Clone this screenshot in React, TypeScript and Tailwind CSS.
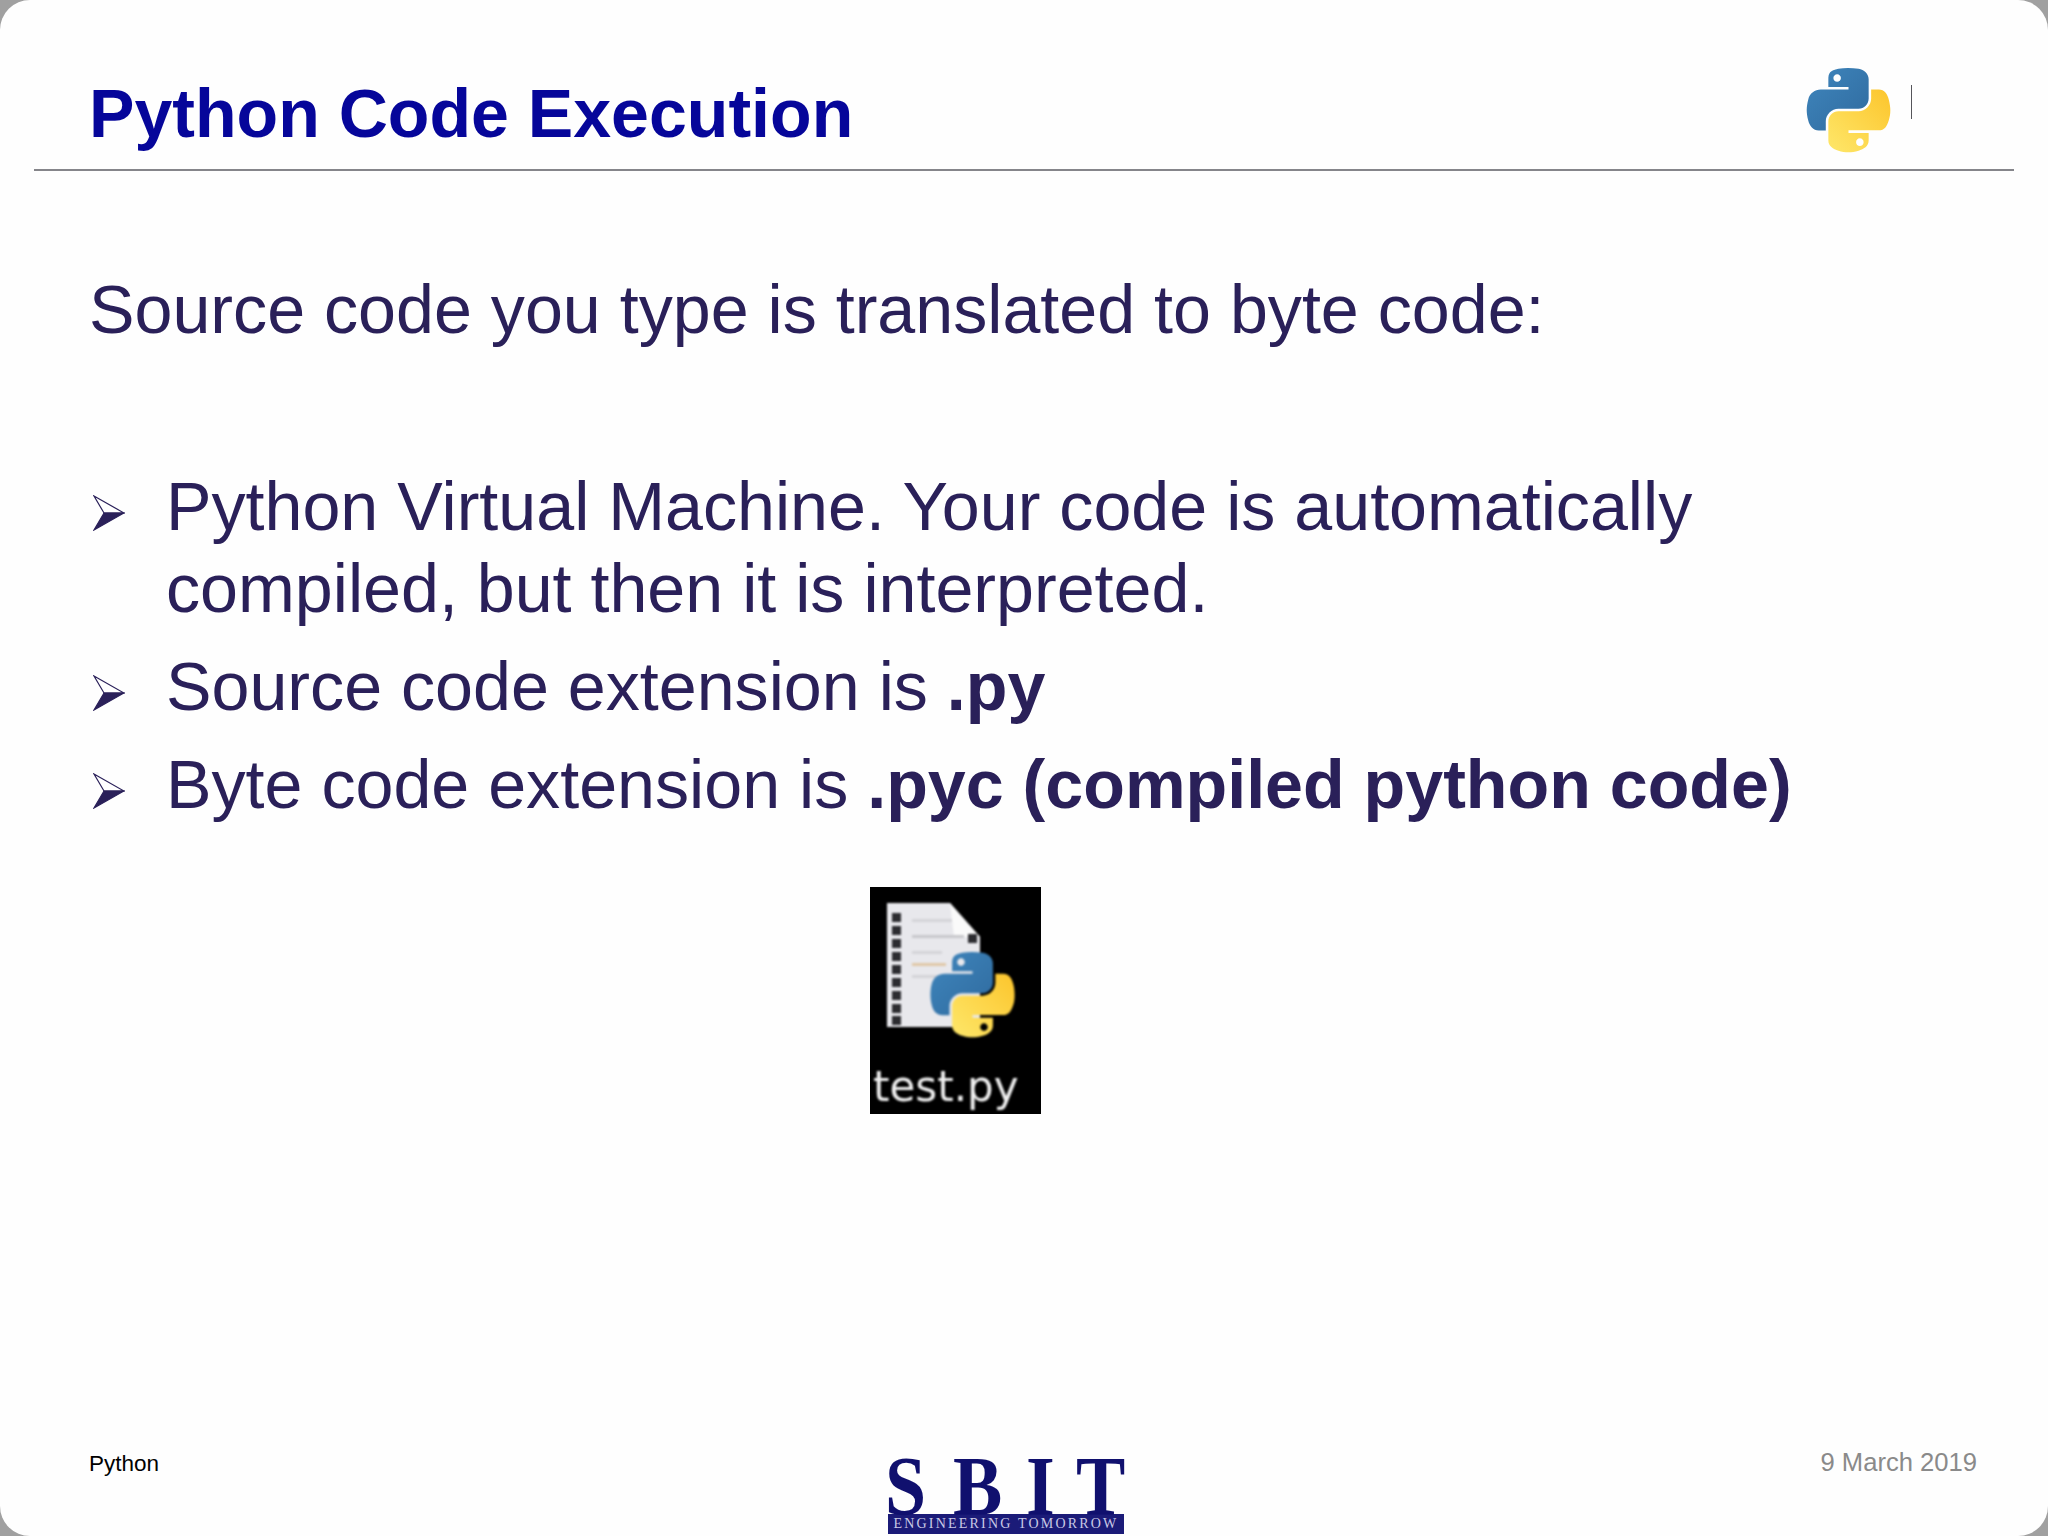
import React from 'react';

function PythonLogo({ id, className }: { id: string; className?: string }) {
  return (
    <svg viewBox="0 0 111 113" className={className}>
      <defs>
        <linearGradient id={`${id}-blue`} x1="0" y1="0" x2="1" y2="1">
          <stop offset="0" stopColor="#3f86bd" />
          <stop offset="1" stopColor="#2f6a9e" />
        </linearGradient>
        <linearGradient id={`${id}-yellow`} x1="1" y1="0" x2="0" y2="1">
          <stop offset="0" stopColor="#fcc52c" />
          <stop offset="1" stopColor="#fee76a" />
        </linearGradient>
      </defs>
      <path
        fill={`url(#${id}-blue)`}
        fillRule="evenodd"
        d="M54.9 0C50.3 0 46 .4 42.1 1.1 30.8 3.1 28.7 7.3 28.7 15v10.2h26.8v3.4H18.6C10.8 28.7 4 33.3 1.9 42.2c-2.5 10.2-2.6 16.6 0 27.3 1.9 7.9 6.5 13.5 14.2 13.5h9.2V70.8c0-8.9 7.7-16.7 16.8-16.7h26.8c7.4 0 13.4-6.1 13.4-13.6V15c0-7.2-6.1-12.7-13.4-13.9C64.3.3 59.5 0 54.9 0zM40.4 8.2c2.8 0 5 2.3 5 5.1 0 2.8-2.3 5.1-5 5.1-2.8 0-5-2.3-5-5.1 0-2.8 2.3-5.1 5-5.1z"
      />
      <path
        fill={`url(#${id}-yellow)`}
        fillRule="evenodd"
        d="M85.6 28.7v11.8c0 9.2-7.8 16.9-16.7 16.9H42.1c-7.3 0-13.4 6.3-13.4 13.6v25.5c0 7.2 6.3 11.5 13.4 13.6 8.5 2.5 16.7 2.9 26.8 0 6.7-2 13.4-5.9 13.4-13.6V86.3H55.5v-3.4h40.2c7.8 0 10.7-5.4 13.4-13.6 2.8-8.4 2.7-16.5 0-27.1-1.9-7.6-5.6-13.5-13.4-13.5zM70.6 93.5c2.8 0 5 2.3 5 5.1 0 2.8-2.3 5.1-5 5.1-2.8 0-5-2.3-5-5.1 0-2.8 2.2-5.1 5-5.1z"
      />
    </svg>
  );
}

function Arrow() {
  return (
    <svg viewBox="0 0 32 36" className="w-8 h-9 shrink-0 mt-[30px]">
      <path d="M1 1 L31 18 L11 18 Z" fill="#ffffff" stroke="#2a2059" strokeWidth="1.2" />
      <path d="M1 35 L31 18 L11 18 Z" fill="#2a2059" stroke="#2a2059" strokeWidth="1.2" />
    </svg>
  );
}

function FileIcon() {
  const holes = [26, 39, 52, 65, 78, 91, 104, 117, 129];
  return (
    <svg viewBox="0 0 171 178" className="w-[171px] h-[178px] blur-[1px]">
      <path d="M17 16 H80 L110 50 V140 H17 Z" fill="#e8e8ec" />
      <path d="M80 16 L110 50 H84 Z" fill="#fafafa" />
      <rect x="42" y="32" width="40" height="3" fill="#d4d4d8" />
      <rect x="42" y="48" width="52" height="3" fill="#c8c8cc" />
      <rect x="42" y="64" width="30" height="3" fill="#d4d4d8" />
      <rect x="42" y="76" width="34" height="3" fill="#e0c8a8" />
      <rect x="42" y="88" width="26" height="3" fill="#d4d4d8" />
      {holes.map((y) => (
        <rect key={y} x="22" y={y} width="9" height="9" fill="#2c2c30" />
      ))}
      <rect x="98" y="47" width="9" height="9" fill="#2c2c30" />
      <svg x="60" y="65" width="85" height="86" viewBox="0 0 111 113">
        <foreignObject width="111" height="113">
          <PythonLogo id="file" className="w-[111px] h-[113px]" />
        </foreignObject>
      </svg>
    </svg>
  );
}

export default function App() {
  const sans = 'font-["Liberation_Sans",Arial,sans-serif]';
  return (
    <div className="w-[2048px] h-[1536px] bg-[#a0a0a0] overflow-hidden">
      <div className={`relative w-full h-full bg-[#fefefe] rounded-[30px] flex flex-col ${sans}`}>
        {/* Header */}
        <div className="mx-[34px] h-[171px] border-b-[2px] border-[#85858a] flex items-start pl-[55px]">
          <h1 className="mt-[74px] text-[68.1px] leading-[78px] font-bold text-[#06069a]">Python Code Execution</h1>
          <PythonLogo id="head" className="ml-auto mt-[68px] w-[85px] h-[85px] blur-[0.5px]" />
          <div className="ml-[20px] mr-[102px] mt-[85px] w-px h-[34px] bg-[#55555a]" />
        </div>

        {/* Body */}
        <div className="pl-[89px] text-[#2a2059] text-[68.2px] leading-[82px]">
          <p className="mt-[97px]">Source code you type is translated to byte code:</p>
          <ul className="mt-[115px] flex flex-col gap-4">
            <li className="flex">
              <span className="w-[77px] pl-1"><Arrow /></span>
              <span>
                Python Virtual Machine. Your code is automatically
                <br />
                compiled, but then it is interpreted.
              </span>
            </li>
            <li className="flex">
              <span className="w-[77px] pl-1"><Arrow /></span>
              <span>Source code extension is <b>.py</b></span>
            </li>
            <li className="flex">
              <span className="w-[77px] pl-1"><Arrow /></span>
              <span>Byte code extension is <b>.pyc (compiled python code)</b></span>
            </li>
          </ul>
        </div>

        {/* Screenshot of the file icon */}
        <div className="ml-[870px] mt-[62px] w-[171px] h-[227px] bg-black overflow-hidden">
          <FileIcon />
          <div className='text-[#f0f0f0] text-[42px] leading-[44px] pl-[3px] font-["DejaVu_Sans",sans-serif] blur-[0.8px]'>test.py</div>
        </div>

        {/* Footer */}
        <div className="mt-auto flex items-start pl-[89px] pr-[71px]">
          <span className="w-[789px] mt-[-2px] text-[22.5px] leading-[26px] text-black">Python</span>
          <div className="w-[248px] h-[83px] font-['Liberation_Serif',serif] blur-[0.5px]">
            <div className="h-[61px] pl-[7px] grid grid-cols-[68px_73px_50px_50px] text-[84px] leading-[67px] font-bold text-[#10106e]">
              <span className="origin-left scale-x-[0.88]">S</span>
              <span className="origin-left scale-x-[0.88]">B</span>
              <span className="origin-left scale-x-[0.88]">I</span>
              <span className="origin-left scale-x-[0.88]">T</span>
            </div>
            <div className="ml-[10px] mr-[2px] h-[20px] bg-[#1b1b78] text-[#c9c9e6] text-[14px] leading-[20px] text-center tracking-[2.2px] whitespace-nowrap overflow-hidden">
              ENGINEERING TOMORROW
            </div>
          </div>
          <span className="ml-auto mt-[-6px] text-[25.6px] leading-[30px] text-[#8a8a8a]">9 March 2019</span>
        </div>
      </div>
    </div>
  );
}
